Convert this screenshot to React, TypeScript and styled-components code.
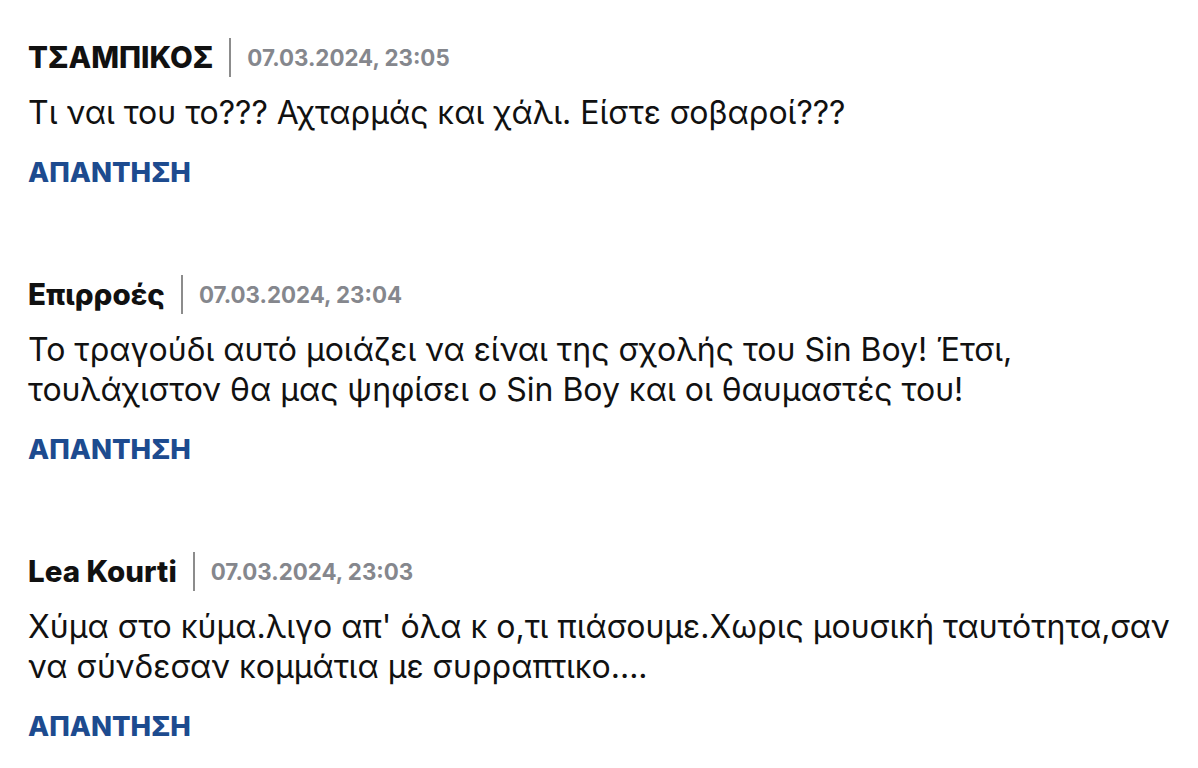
import React from "react";
import styled, { createGlobalStyle } from "styled-components";

interface CommentData {
  author: string;
  date: string;
  text: string;
}

const comments: CommentData[] = [
  {
    author: "ΤΣΑΜΠΙΚΟΣ",
    date: "07.03.2024, 23:05",
    text: "Τι ναι του το??? Αχταρμάς και χάλι. Είστε σοβαροί???",
  },
  {
    author: "Επιρροές",
    date: "07.03.2024, 23:04",
    text: "Το τραγούδι αυτό μοιάζει να είναι της σχολής του Sin Boy! Έτσι, τουλάχιστον θα μας ψηφίσει ο Sin Boy και οι θαυμαστές του!",
  },
  {
    author: "Lea Kourti",
    date: "07.03.2024, 23:03",
    text: "Χύμα στο κύμα.λιγο απ' όλα κ ο,τι πιάσουμε.Χωρις μουσική ταυτότητα,σαν να σύνδεσαν κομμάτια με συρραπτικο....",
  },
];

const GlobalStyle = createGlobalStyle`
  body {
    margin: 0;
    background: #ffffff;
    font-family: Inter, "Noto Sans", sans-serif;
  }
`;

const List = styled.div`
  display: flex;
  flex-direction: column;
  gap: 88px;
  padding: 37px 0 0 28px;
  width: 1160px;
`;

const Item = styled.article`
  display: flex;
  flex-direction: column;
  align-items: flex-start;
`;

const Header = styled.div`
  display: flex;
  align-items: center;
  height: 40px;
`;

const Author = styled.span`
  font-size: 29.5px;
  font-weight: 800;
  color: #111;
`;

const Divider = styled.span`
  width: 2px;
  height: 39px;
  margin: 0 16px;
  background: #8c8c8c;
`;

const Stamp = styled.span`
  font-size: 22.3px;
  font-weight: 700;
  color: #85878d;
`;

const Body = styled.p`
  margin: 16px 0 0;
  font-size: 32px;
  line-height: 40px;
  color: #111;
`;

const Reply = styled.a`
  display: block;
  margin-top: 25px;
  font-size: 27.5px;
  line-height: 28px;
  font-weight: 800;
  color: #1d4b8f;
  text-decoration: none;
  cursor: pointer;
`;

const Comment: React.FC<{ data: CommentData }> = ({ data }) => (
  <Item>
    <Header>
      <Author>{data.author}</Author>
      <Divider />
      <Stamp>{data.date}</Stamp>
    </Header>
    <Body>{data.text}</Body>
    <Reply>ΑΠΑΝΤΗΣΗ</Reply>
  </Item>
);

export default function App() {
  return (
    <>
      <GlobalStyle />
      <List>
        {comments.map((c) => (
          <Comment key={c.date} data={c} />
        ))}
      </List>
    </>
  );
}
